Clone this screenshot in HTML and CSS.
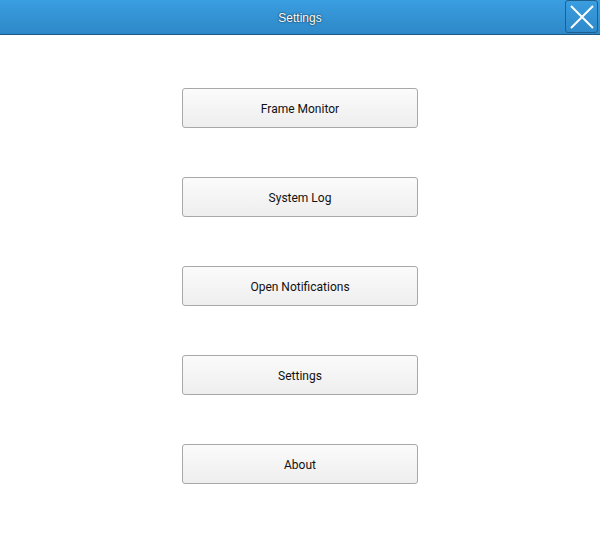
FILE: index.html
```html
<!DOCTYPE html>
<html lang="en">
<head>
<meta charset="UTF-8">
<title>Settings</title>
<link rel="stylesheet" href="styles.css">
</head>
<body>
<div class="app">
    <header class="header">
        <div class="header-title">Settings</div>
        <button class="close-btn" aria-label="Close">
            <svg width="26" height="26" viewBox="0 0 26 26">
                <path d="M2 2 L24 24 M24 2 L2 24" stroke="#fff" stroke-width="2" fill="none"/>
            </svg>
        </button>
    </header>
    <main class="menu">
        <button class="menu-btn">Frame Monitor</button>
        <button class="menu-btn">System Log</button>
        <button class="menu-btn">Open Notifications</button>
        <button class="menu-btn">Settings</button>
        <button class="menu-btn">About</button>
    </main>
</div>
</body>
</html>
```

FILE: styles.css
```css
body {
    margin: 0;
    padding: 0;
    background-color: #fff;
    font-family: Roboto, 'Liberation Sans', sans-serif;
}
.app {
    width: 600px;
    height: 534px;
}
.header {
    position: relative;
    height: 34px;
    background: linear-gradient(to bottom, #3a9ee0, #2d88c8);
    border-bottom: 1px solid #1d5a85;
    display: flex;
    align-items: center;
    justify-content: center;
}
.header-title {
    color: #fff;
    font-family: 'Liberation Sans', sans-serif;
    font-size: 12px;
    padding-top: 1px;
    text-shadow: 0 0 1px #0d3a5c, 0 0 2px rgba(0, 0, 0, 0.7);
}
.close-btn {
    position: absolute;
    top: 0;
    right: 2px;
    width: 33px;
    height: 33px;
    padding: 0;
    border: 1px solid #1f5f8e;
    border-radius: 3px;
    background: transparent;
    display: flex;
    align-items: center;
    justify-content: center;
}
.menu {
    display: flex;
    flex-direction: column;
    align-items: center;
    gap: 49px;
    padding-top: 53px;
}
.menu-btn {
    width: 236px;
    height: 40px;
    padding: 2px 0 0;
    border: 1px solid #a8a8a8;
    border-radius: 3px;
    background: linear-gradient(to bottom, #fbfbfb, #eeeeee);
    font-family: Roboto, 'Liberation Sans', sans-serif;
    font-size: 12px;
    color: #111;
}
```
